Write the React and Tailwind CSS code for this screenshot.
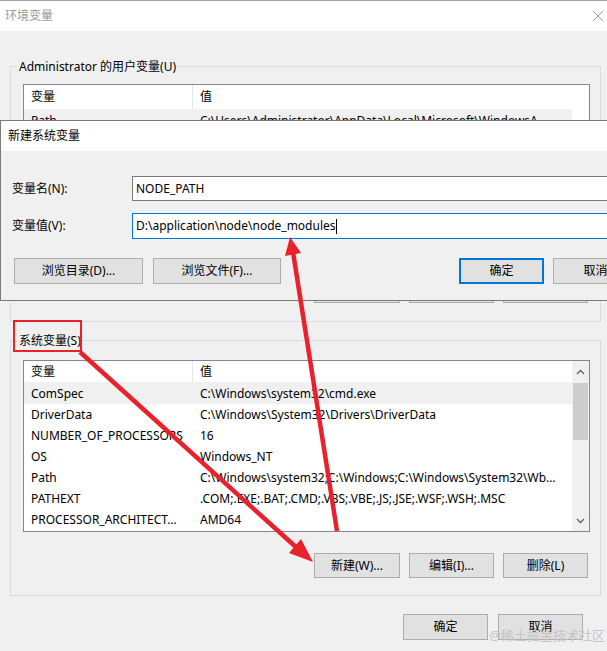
import React from 'react';

const FONT = { fontFamily: '"Noto Sans", "Noto Sans CJK SC", sans-serif' };

const userRows = [
  ['Path', 'C:\\Users\\Administrator\\AppData\\Local\\Microsoft\\WindowsA...'],
  ['TEMP', 'C:\\Users\\Administrator\\AppData\\Local\\Temp'],
  ['TMP', 'C:\\Users\\Administrator\\AppData\\Local\\Temp'],
];

const sysRows = [
  ['ComSpec', 'C:\\Windows\\system32\\cmd.exe'],
  ['DriverData', 'C:\\Windows\\System32\\Drivers\\DriverData'],
  ['NUMBER_OF_PROCESSORS', '16'],
  ['OS', 'Windows_NT'],
  ['Path', 'C:\\Windows\\system32;C:\\Windows;C:\\Windows\\System32\\Wb…'],
  ['PATHEXT', '.COM;.EXE;.BAT;.CMD;.VBS;.VBE;.JS;.JSE;.WSF;.WSH;.MSC'],
  ['PROCESSOR_ARCHITECT…', 'AMD64'],
];

function WinButton({ children, className = '', primary = false }) {
  return (
    <div
      className={`flex items-center justify-center bg-[#e1e1e1] text-[12px] text-black ${
        primary ? 'border-2 border-[#0078d7]' : 'border border-[#adadad]'
      } ${className}`}
    >
      {children}
    </div>
  );
}

function ListView({ rows, height, headerHeight, scrollbar }) {
  return (
    <div className="flex border border-[#828790] bg-white" style={{ height }}>
      <div className="flex-1 overflow-hidden">
        <div className="flex items-center border-b border-[#f0f0f0] text-[12px]" style={{ height: headerHeight }}>
          <div className="w-[169px] h-full flex items-center pl-[7px] border-r border-[#e5e5e5]">变量</div>
          <div className="pl-[7px]">值</div>
        </div>
        {rows.map((r, i) => (
          <div key={r[0]} className={`flex h-[21px] items-center text-[12px] ${i === 0 ? 'bg-[#f0f0f0]' : ''}`}>
            <div className="w-[169px] pl-[7px] whitespace-nowrap overflow-visible">{r[0]}</div>
            <div className="pl-[7px] whitespace-nowrap">{r[1]}</div>
          </div>
        ))}
      </div>
      <div className={`w-[17px] flex flex-col ${scrollbar ? 'bg-[#f0f0f0]' : 'bg-white'}`}>
        {scrollbar && (
          <>
            <div className="h-[22px] flex items-center justify-center">
              <svg width="9" height="6" viewBox="0 0 9 6"><path d="M1 5 L4.5 1.5 L8 5" stroke="#606060" strokeWidth="1.3" fill="none" /></svg>
            </div>
            <div className="mx-[1px] h-[57px] bg-[#cdcdcd]" />
            <div className="flex-1" />
            <div className="h-[20px] flex items-center justify-center">
              <svg width="9" height="6" viewBox="0 0 9 6"><path d="M1 1 L4.5 4.5 L8 1" stroke="#606060" strokeWidth="1.3" fill="none" /></svg>
            </div>
          </>
        )}
      </div>
    </div>
  );
}

function GroupBox({ label, labelLeft, children, className = '' }) {
  return (
    <div className={`border border-[#dcdcdc] ${className}`}>
      <div className="-mt-[9px] h-[18px] leading-[18px] text-[12px] w-fit bg-[#f0f0f0] px-[1px]" style={{ marginLeft: labelLeft }}>
        {label}
      </div>
      {children}
    </div>
  );
}

export default function App() {
  return (
    <div className="relative w-[607px] h-[651px] overflow-hidden bg-[#f0f0f0] text-black" style={FONT}>
      {/* main window */}
      <div className="flex h-[31px] items-center justify-between bg-white border-t border-[#a0a0a0] pl-[5px] pr-[3px]">
        <span className="text-[12px] text-[#9a9a9a]">环境变量</span>
        <svg width="12" height="12" viewBox="0 0 12 12"><path d="M1 1 L11 11 M11 1 L1 11" stroke="#9a9a9a" strokeWidth="1" /></svg>
      </div>

      <div className="pl-[10px] pr-[6px]">
        <GroupBox label="Administrator 的用户变量(U)" labelLeft="7px" className="mt-[35px] pb-[18px]">
          <div className="mt-[8px] ml-[12px] mr-[10px]">
            <ListView rows={userRows} height="173px" headerHeight="25px" scrollbar={false} />
          </div>
          <div className="mt-[21px] flex justify-end gap-[9px] pr-[12px]">
            <WinButton className="w-[86px] h-[25px]">新建(N)...</WinButton>
            <WinButton className="w-[85px] h-[25px]">编辑(E)...</WinButton>
            <WinButton className="w-[85px] h-[25px]">删除(D)</WinButton>
          </div>
        </GroupBox>

        <GroupBox label="系统变量(S)" labelLeft="7px" className="mt-[18px] pb-[17px]">
          <div className="mt-[10px] ml-[12px] mr-[10px]">
            <ListView rows={sysRows} height="172px" headerHeight="22px" scrollbar />
          </div>
          <div className="mt-[21px] flex justify-end gap-[9px] pr-[12px]">
            <WinButton className="w-[86px] h-[25px]">新建(W)...</WinButton>
            <WinButton className="w-[85px] h-[25px]">编辑(I)...</WinButton>
            <WinButton className="w-[85px] h-[25px]">删除(L)</WinButton>
          </div>
        </GroupBox>
      </div>

      <div className="mt-[18px] flex justify-end gap-[10px] pr-[24px]">
        <WinButton className="w-[85px] h-[26px]">确定</WinButton>
        <WinButton className="w-[85px] h-[26px]">取消</WinButton>
      </div>

      {/* new system variable dialog, lying over the main window */}
      <div className="absolute left-0 top-[120px] w-[660px] h-[181px] border border-[#7a7a7a] bg-[#f0f0f0] flex flex-col">
        <div className="h-[30px] bg-white flex items-center pl-[7px] text-[12px]">新建系统变量</div>
        <div className="flex flex-col pl-[11px]">
          <div className="mt-[25px] flex items-center h-[25px]">
            <div className="w-[120px] text-[12px]">变量名(N):</div>
            <div className="w-[500px] h-full border border-[#7a7a7a] bg-white flex items-center pl-[3px] text-[12px]">NODE_PATH</div>
          </div>
          <div className="mt-[12px] flex items-center h-[26px]">
            <div className="w-[120px] text-[12px]">变量值(V):</div>
            <div className="w-[500px] h-full border border-[#0078d7] bg-white flex items-center pl-[3px] text-[12px]">
              D:\application\node\node_modules
              <span className="inline-block w-[1px] h-[15px] bg-black" />
            </div>
          </div>
          <div className="mt-[19px] flex h-[26px]">
            <WinButton className="ml-[2px] w-[129px] h-full">浏览目录(D)...</WinButton>
            <WinButton className="ml-[10px] w-[128px] h-full">浏览文件(F)...</WinButton>
            <WinButton primary className="ml-[178px] w-[85px] h-full">确定</WinButton>
            <WinButton className="ml-[9px] w-[85px] h-full">取消</WinButton>
          </div>
        </div>
      </div>

      {/* red annotations */}
      <svg className="absolute inset-0 pointer-events-none" width="607" height="651" viewBox="0 0 607 651">
        <rect x="14" y="321" width="67" height="30" fill="none" stroke="#e8212d" strokeWidth="2" />
        <line x1="80" y1="352" x2="297" y2="548" stroke="#e8212d" strokeWidth="4.5" />
        <polygon points="313,562 289,553 301,539" fill="#e8212d" />
        <line x1="337" y1="531" x2="293" y2="252" stroke="#e8212d" strokeWidth="4.5" />
        <polygon points="290,237 301,253 285,256" fill="#e8212d" />
      </svg>

      <div className="absolute right-[2px] bottom-[6px] text-[13px] text-[#c4c4c4] pointer-events-none">@稀土掘金技术社区</div>
    </div>
  );
}
